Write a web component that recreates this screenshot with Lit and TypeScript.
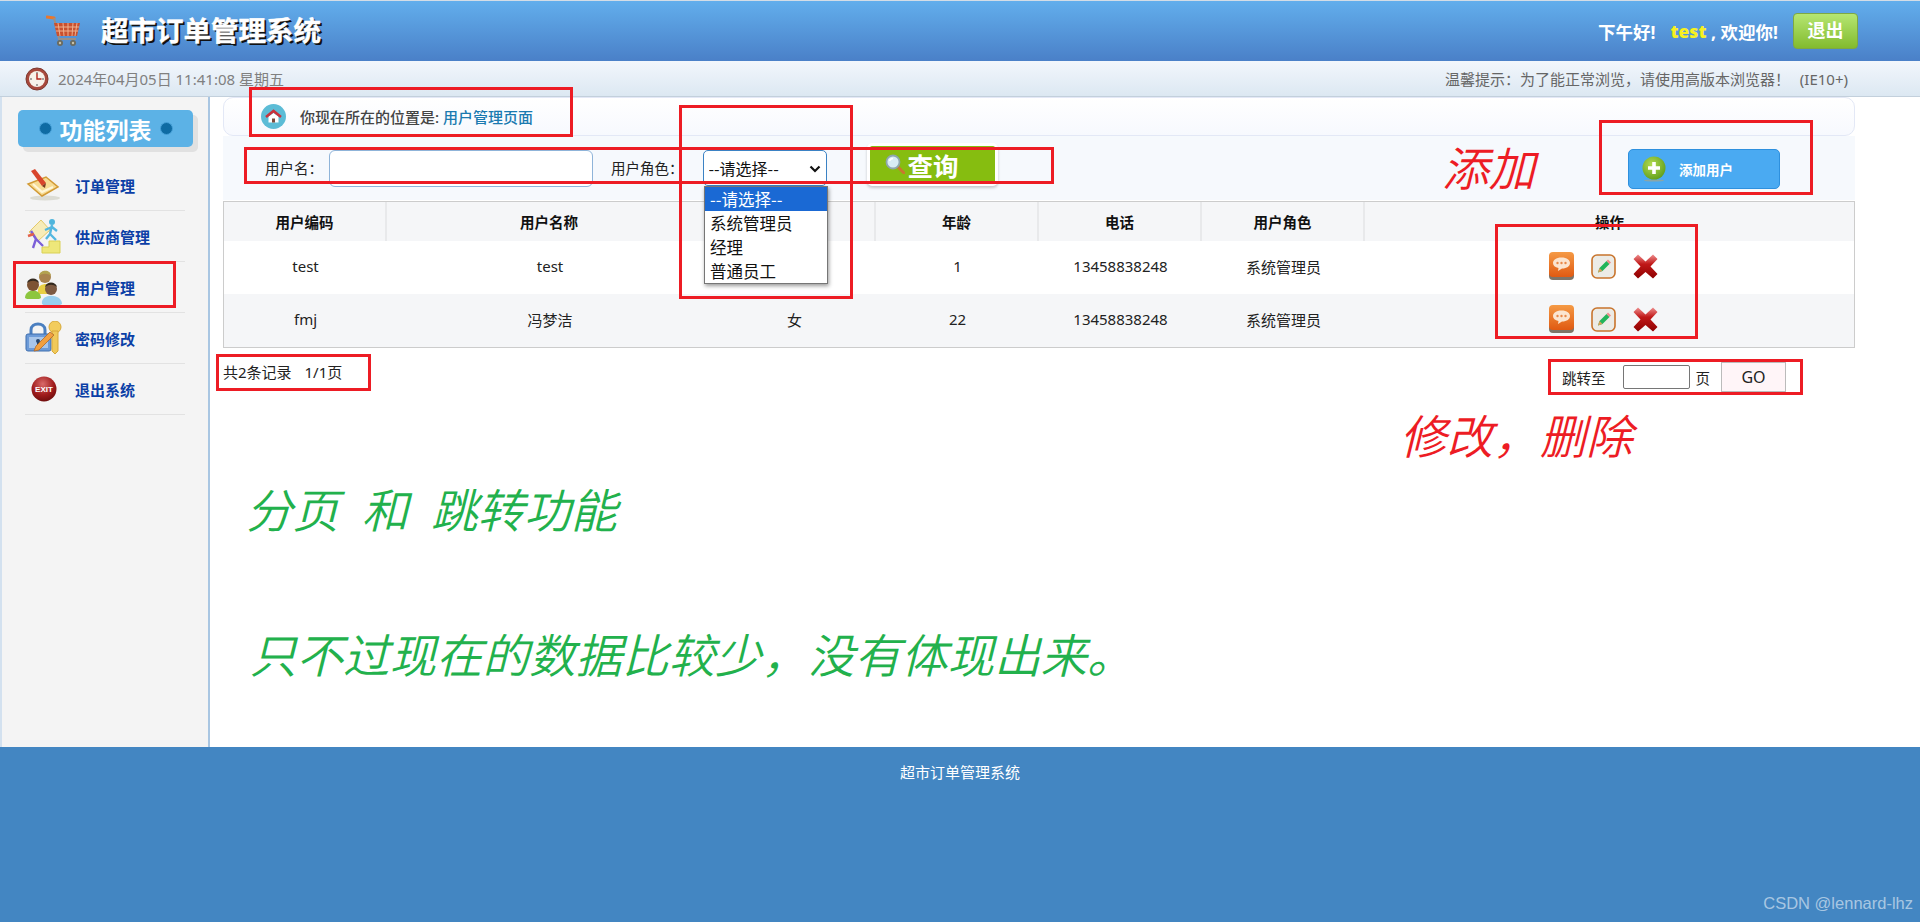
import { LitElement, html, css, svg } from 'lit';
import { customElement } from 'lit/decorators.js';
import { styleMap } from 'lit/directives/style-map.js';

const cartIcon = html`<svg width="35" height="32" viewBox="0 0 35 32">
  <path d="M1 2 L8 3" stroke="#e8772e" stroke-width="3" fill="none" stroke-linecap="round"/>
  <path d="M8 3 L13 24 L30 24" stroke="#9a8f88" stroke-width="2" fill="none"/>
  <path d="M8 8 H34 L31 21 H11 Z" fill="#c9502f"/>
  <path d="M12 8 L14 21 M17 8 L18 21 M22 8 L22 21 M27 8 L26 21 M31 8 L29 21 M9 12 H33 M10 16 H32" stroke="#eeb08e" stroke-width="1"/>
  <circle cx="14" cy="28" r="3" fill="#6b6b5f"/><circle cx="27" cy="28" r="3" fill="#6b6b5f"/>
  <circle cx="14" cy="28" r="1.2" fill="#c9c2a8"/><circle cx="27" cy="28" r="1.2" fill="#c9c2a8"/>
</svg>`;

const clockIcon = html`<svg width="24" height="24" viewBox="0 0 24 24">
  <circle cx="12" cy="12" r="11" fill="#a8483c" stroke="#7d3a30" stroke-width="1"/>
  <circle cx="12" cy="12" r="8" fill="#f7f2ea"/>
  <path d="M12 5 V7 M12 17 V19 M5 12 H7 M17 12 H19" stroke="#555" stroke-width="1"/>
  <path d="M12 6.5 V12 L16.5 12" stroke="#b3261e" stroke-width="1.4" fill="none"/>
</svg>`;

const homeIcon = html`<svg width="25" height="25" viewBox="0 0 25 25">
  <circle cx="12.5" cy="12.5" r="12.5" fill="#5cbcd6"/>
  <path d="M7.5 12.5 V18.5 H17.5 V12.5 L12.5 9 Z" fill="#fff"/>
  <path d="M11 14.5 H14 V18.5 H11 Z" fill="#7a4a3a"/>
  <path d="M5 13 L12.5 7 L20 13" stroke="#c8323c" stroke-width="2.6" fill="none"/>
</svg>`;

const orderIcon = html`<svg width="38" height="36" viewBox="0 0 38 36">
  <ellipse cx="20" cy="31" rx="15" ry="2.5" fill="#dcdcd4"/>
  <path d="M3 17 L17 29 L33 20 L21 10 Z" fill="#f7dc94" stroke="#d29a35" stroke-width="1.5"/>
  <path d="M8 17 L17 25 L28 20" stroke="#fff6d8" stroke-width="2" fill="none"/>
  <path d="M6 4 L10 2 L21 16 L17 19 Z" fill="#d8452c"/>
  <path d="M17 19 L21 16 L20 21 Z" fill="#7a3a20"/>
</svg>`;

const supplierIcon = html`<svg width="38" height="38" viewBox="0 0 38 38">
  <path d="M17 36 V30 H24 V24 H35 V36 Z" fill="#eee77a" stroke="#d9d055" stroke-width="1"/>
  <path d="M4 15 L16 3 L25 13 L13 24 Z" fill="#f7ecb8" stroke="#e3c96a" stroke-width="1"/>
  <circle cx="27" cy="5" r="3" fill="#4fb5dc"/>
  <path d="M27 8 L25 17 L21 22 M25 17 L31 23 M27 10 L32 14 M27 10 L20 13" stroke="#53b7e0" stroke-width="2.4" fill="none"/>
  <path d="M6 14 L11 22 L8 31 M11 22 L18 29" stroke="#7b5fd8" stroke-width="2.4" fill="none"/>
  <path d="M3 19 L9 17" stroke="#e2624a" stroke-width="2.4"/>
</svg>`;

const usersIcon = html`<svg width="38" height="38" viewBox="0 0 38 38">
  <path d="M13 22 C13 14 29 14 29 22 V26 H13 Z" fill="#e8cf45"/>
  <circle cx="20" cy="9" r="6" fill="#a9834e"/>
  <path d="M14 8 C15 1 26 1 26 8 C23 5 17 5 14 8 Z" fill="#b3a250"/>
  <path d="M0 30 C0 20 16 20 16 30 L14 31 H2 Z" fill="#8dc63f"/>
  <circle cx="8" cy="17" r="6" fill="#7d5334"/>
  <path d="M2 15 C3 9 13 9 14 15 C10 12 6 12 2 15 Z" fill="#33291f"/>
  <path d="M17 36 C15 25 37 25 37 36 L33 38 H20 Z" fill="#98cfee"/>
  <circle cx="26" cy="21" r="6" fill="#7d5a42"/>
  <path d="M20 19 C21 13 31 13 32 19 C28 16 24 16 20 19 Z" fill="#33291f"/>
</svg>`;

const lockIcon = html`<svg width="38" height="34" viewBox="0 0 38 34">
  <path d="M6 14 V9 C6 1 20 1 20 9 V14" stroke="#4a7fc0" stroke-width="3" fill="none"/>
  <rect x="1" y="13" width="25" height="17" rx="2" fill="#6d9bd8" stroke="#3f6fae"/>
  <rect x="4" y="16" width="19" height="11" fill="#a9c6ea"/>
  <circle cx="13" cy="20" r="2" fill="#26466f"/><rect x="12" y="20" width="2" height="5" fill="#26466f"/>
  <circle cx="30" cy="6" r="6" fill="#f2cc5e" stroke="#d7a93a"/>
  <path d="M27 10 H33 V30 L30 33 L27 30 Z" fill="#f0c95a" stroke="#d7a93a"/>
  <path d="M9 30 L11 25 L25 11 L29 14 L14 29 Z" fill="#f2a040" stroke="#b06a28" stroke-width=".8"/>
</svg>`;

const exitIcon = html`<svg width="26" height="26" viewBox="0 0 26 26">
  <defs><radialGradient id="exitBall" cx=".45" cy=".3" r=".8">
    <stop offset="0" stop-color="#d96a6a"/><stop offset=".55" stop-color="#a01c1c"/><stop offset="1" stop-color="#5e0808"/>
  </radialGradient></defs>
  <circle cx="13" cy="13" r="12.5" fill="url(#exitBall)"/>
  <text x="13" y="15.5" text-anchor="middle" font-family="Liberation Sans, sans-serif" font-size="8" font-weight="700" fill="#fff">EXIT</text>
</svg>`;

const plusIcon = html`<svg width="24" height="26" viewBox="0 0 24 26">
  <defs><radialGradient id="plusBall" cx=".4" cy=".35" r=".7">
    <stop offset="0" stop-color="#b4dc52"/><stop offset="1" stop-color="#5f9e1a"/>
  </radialGradient></defs>
  <ellipse cx="12" cy="24.5" rx="10" ry="1" fill="#8aa6a8"/>
  <circle cx="12" cy="12" r="11.5" fill="url(#plusBall)"/>
  <path d="M12 6 V18 M6 12 H18" stroke="#fff" stroke-width="3.6"/>
</svg>`;

const chatIcon = html`<svg width="25" height="28" viewBox="0 0 25 28">
  <defs><linearGradient id="chatBg" x1="0" y1="0" x2="0" y2="1">
    <stop offset="0" stop-color="#f59a45"/><stop offset="1" stop-color="#e05a12"/>
  </linearGradient></defs>
  <rect x="0" y="2" width="25" height="26" rx="4" fill="#7d7468"/>
  <rect x="0" y="0" width="25" height="25" rx="4" fill="url(#chatBg)"/>
  <path d="M12.5 5.5 C18 5.5 21 8 21 11 C21 14 18 16.5 13 16.5 L9 19 L9.5 16 C6 15.5 4 13.5 4 11 C4 8 7 5.5 12.5 5.5 Z" fill="#fbe5d0"/>
  <circle cx="8.5" cy="11" r="1.2" fill="#e8894a"/><circle cx="12.5" cy="11" r="1.2" fill="#e8894a"/><circle cx="16.5" cy="11" r="1.2" fill="#e8894a"/>
</svg>`;

const editIcon = html`<svg width="25" height="25" viewBox="0 0 25 25">
  <rect x="1" y="1" width="23" height="23" rx="5" fill="#ecebe6" stroke="#c8742c" stroke-width="1.6"/>
  <path d="M7 18.5 L8.5 14 L15.5 7 L18.5 10 L11.5 17 Z" fill="#22b45a"/>
  <path d="M15.5 7 L17 5.5 L20 8.5 L18.5 10 Z" fill="#ef8c8c"/>
  <path d="M7 18.5 L8.5 14 L11.5 17 Z" fill="#d9a05a"/>
</svg>`;

const delIcon = html`<svg width="25" height="25" viewBox="0 0 25 25">
  <defs><linearGradient id="delBg" x1="0" y1="0" x2="0" y2="1">
    <stop offset="0" stop-color="#ef8f8f"/><stop offset=".4" stop-color="#c01818"/><stop offset="1" stop-color="#8e0000"/>
  </linearGradient></defs>
  <path d="M0.5 5 L5 0.5 L12.5 7.5 L20 0.5 L24.5 5 L17.5 12.5 L24.5 20 L20 24.5 L12.5 18 L5 24.5 L0.5 20 L7.5 12.5 Z" fill="url(#delBg)"/>
</svg>`;

const searchIcon = svg`<path d="M12 12 L20 20" stroke="#c9772e" stroke-width="3"/>
  <circle cx="8" cy="8" r="6.5" fill="#d8ecf4" stroke="#8ea6ad" stroke-width="1.8"/>
  <path d="M4.5 7 C5 5.5 6.5 4.5 8 4.5" stroke="#fff" stroke-width="1.4" fill="none"/>`;

const chevron = html`<svg class="chev" width="12" height="8" viewBox="0 0 12 8">
  <path d="M1.5 1.5 L6 6 L10.5 1.5" stroke="#111" stroke-width="2.2" fill="none"/>
</svg>`;

const MENU = [
  { name: '订单管理', icon: orderIcon },
  { name: '供应商管理', icon: supplierIcon },
  { name: '用户管理', icon: usersIcon },
  { name: '密码修改', icon: lockIcon },
  { name: '退出系统', icon: exitIcon },
];

const COLUMNS = ['用户编码', '用户名称', '性别', '年龄', '电话', '用户角色', '操作'];

const ROWS = [
  ['test', 'test', '女', '1', '13458838248', '系统管理员'],
  ['fmj', '冯梦洁', '女', '22', '13458838248', '系统管理员'],
];

const ROLES = ['--请选择--', '系统管理员', '经理', '普通员工'];

// hand drawn review marks lying over the page: left, top, width, height
const MARKS = [
  [249, 87, 324, 50],
  [244, 147, 810, 37],
  [679, 105, 174, 194],
  [1599, 120, 214, 75],
  [13, 261, 163, 47],
  [1495, 224, 203, 115],
  [216, 354, 155, 37],
  [1548, 359, 255, 36],
];

const NOTES = [
  { text: '添加', x: 1442, y: 136, color: '#ed1c24' },
  { text: '修改，删除', x: 1400, y: 404, color: '#ed1c24' },
  { text: '分页  和  跳转功能', x: 246, y: 478, color: '#22b14c' },
  { text: '只不过现在的数据比较少，没有体现出来。', x: 250, y: 623, color: '#22b14c' },
];

@customElement('app-root')
export class AppRoot extends LitElement {
  static styles = css`
    :host {
      display: block;
      position: relative;
      width: 1920px;
      height: 922px;
      overflow: hidden;
      background: #fff;
      font-family: "Noto Sans", "Noto Sans CJK SC", sans-serif;
      font-size: 15px;
      color: #222;
    }
    .top {
      height: 61px;
      box-sizing: border-box;
      border-top: 1px solid #d4dde6;
      background: linear-gradient(#62aeec, #4a80c8);
      display: flex;
      align-items: center;
      padding: 0 62px 0 46px;
    }
    .brand {
      margin-left: 20px;
      font-size: 27.5px;
      font-weight: 700;
      line-height: 36px;
      color: #fff;
      -webkit-text-stroke: 0.4px #fff;
      text-shadow: 2px 2px 0 #111;
    }
    .hello {
      margin-left: auto;
      font-size: 17.5px;
      font-weight: 700;
      color: #fff;
      display: flex;
      align-items: center;
      white-space: pre;
    }
    .hello b { color: #f7f120; margin-left: 15px; }
    .logout {
      margin-left: 15px;
      width: 65px;
      height: 36px;
      box-sizing: border-box;
      border: 1px solid #7ea843;
      border-radius: 4px;
      background: linear-gradient(#b5e672, #82bb2e);
      font-size: 18px;
      line-height: 33px;
      text-align: center;
    }
    .sub {
      height: 36px;
      box-sizing: border-box;
      border-bottom: 1px solid #c3d0dc;
      background: linear-gradient(#f2f6fc, #dce8f2);
      display: flex;
      align-items: center;
      padding: 0 72px 0 25px;
      color: #808080;
    }
    .sub .date { margin-left: 9px; }
    .sub .tip { margin-left: auto; color: #666; word-spacing: 6px; }
    .main { display: flex; height: 650px; }
    .side {
      width: 210px;
      box-sizing: border-box;
      border-left: 2px solid #d3e1ef;
      border-right: 2px solid #a9c6e2;
      background: #f4f4f4;
      padding: 13px 0 0 16px;
    }
    .side-title {
      width: 175px;
      height: 37px;
      border-radius: 5px;
      background: #5cb2e6;
      box-shadow: 5px 5px 0 #e1e1e1;
      display: flex;
      align-items: center;
      justify-content: center;
      gap: 8px;
      color: #fff;
      font-size: 23px;
      font-weight: 700;
      margin-bottom: 13px;
    }
    .dot {
      width: 11px;
      height: 11px;
      border-radius: 50%;
      background: #0f6ba3;
      border: 1px solid #47a0d8;
    }
    .menu { width: 160px; margin-left: 7px; }
    .menu-item {
      height: 50px;
      border-bottom: 1px solid #e2e2e2;
      display: flex;
      align-items: center;
      position: relative;
      padding-left: 50px;
      color: #0b3fa6;
      font-weight: 700;
    }
    .menu-icon {
      position: absolute;
      left: 0;
      top: 0;
      width: 38px;
      height: 50px;
      display: flex;
      align-items: center;
      justify-content: center;
    }
    .content { flex: 1; padding: 0 65px 0 13px; min-width: 0; }
    .path {
      height: 39px;
      box-sizing: border-box;
      border: 1px solid #e3e8f6;
      border-radius: 10px;
      background: linear-gradient(#fff, #f7f9fe);
      display: flex;
      align-items: center;
      padding-left: 37px;
      font-weight: 500;
      color: #444;
    }
    .path svg { margin-right: 14px; }
    .path span { color: #1a7ab0; margin-left: 4px; }
    .search {
      height: 64px;
      box-sizing: border-box;
      margin-bottom: 1px;
      background: #f6f9fd;
      display: flex;
      align-items: flex-start;
      padding: 14px 75px 0 42px;
      position: relative;
      font-size: 14.5px;
    }
    .search label { line-height: 36px; color: #222; }
    .name-input {
      width: 264px;
      height: 37px;
      box-sizing: border-box;
      margin-left: 6px;
      border: 1px solid #8fb4d9;
      border-radius: 6px;
      background: #fff;
    }
    .role-label { margin-left: 18px; }
    .role-box { position: relative; width: 124px; height: 36px; margin-left: 19px; }
    .role {
      appearance: none;
      width: 124px;
      height: 36px;
      box-sizing: border-box;
      border: 1px solid #3b82c4;
      border-radius: 5px;
      background: #fff;
      font: 16px "Noto Sans CJK SC", sans-serif;
      color: #111;
      padding: 0 0 0 5px;
    }
    .chev { position: absolute; right: 6px; top: 15px; }
    .role-list {
      position: absolute;
      left: 481px;
      top: 50px;
      width: 124px;
      box-sizing: border-box;
      border: 1px solid #767676;
      background: #fff;
      box-shadow: 1px 2px 4px rgba(0, 0, 0, 0.4);
      font-family: "Noto Sans CJK SC", sans-serif;
      font-size: 16.5px;
      line-height: 24px;
      color: #111;
      z-index: 2;
    }
    .role-list div { padding-left: 5px; height: 24px; }
    .role-list .on { background: #1a69d4; color: #fff; }
    .find {
      margin: -7px 0 0 40px;
      width: 125px;
      height: 36px;
      box-sizing: content-box;
      border: solid #fff;
      border-width: 3px 3px 4px;
      border-radius: 5px;
      box-shadow: 0 2px 3px rgba(0, 0, 0, 0.2);
      background: #86bd10;
      display: flex;
      align-items: center;
      color: #fff;
      font-size: 25.5px;
      font-weight: 700;
    }
    .find svg { margin: 0 3px 0 15px; }
    .add {
      margin-left: auto;
      width: 152px;
      height: 40px;
      box-sizing: border-box;
      margin-top: -1px;
      border: 1px solid #2e90de;
      border-radius: 5px;
      background: #4aaaf2;
      display: flex;
      align-items: center;
      padding-left: 13px;
      color: #fff;
      font-size: 13.5px;
      font-weight: 700;
    }
    .add svg { margin-right: 13px; }
    table {
      width: 100%;
      table-layout: fixed;
      border-collapse: separate;
      border-spacing: 0;
      border: 1px solid #ccc;
      text-align: center;
    }
    th {
      height: 39px;
      padding: 0;
      background: #f5f6f8;
      border-right: 2px solid #e8e9eb;
      font-size: 14.5px;
      font-weight: 700;
      color: #111;
    }
    th:last-child { border-right: 0; }
    td { height: 53px; box-sizing: border-box; padding: 0 0 3px; color: #222; }
    tr:nth-child(even) td { background: #f5f6f8; }
    .ops { display: flex; justify-content: center; align-items: center; gap: 17px; margin-left: -13px; }
    .pager { display: flex; align-items: flex-start; padding-top: 14px; }
    .count { line-height: 20px; word-spacing: 9px; }
    .jump { margin: 0 69px 0 auto; display: flex; align-items: center; height: 30px; font-size: 14.5px; }
    .jump-input {
      width: 67px;
      height: 24px;
      box-sizing: border-box;
      margin: 0 6px 0 17px;
      border: 1px solid #767676;
      border-radius: 2px;
      background: #fff;
    }
    .go {
      width: 65px;
      height: 30px;
      box-sizing: border-box;
      margin-left: 11px;
      border: 1px solid #bbb;
      background: #fff5f8;
      font-size: 16px;
      line-height: 28px;
      text-align: center;
    }
    .foot {
      height: 175px;
      background: #4386c2;
      color: #fff;
      text-align: center;
      padding-top: 14px;
      box-sizing: border-box;
      line-height: 22px;
    }
    .mark {
      position: absolute;
      box-sizing: border-box;
      border: 3px solid #ed1c24;
      z-index: 3;
    }
    .note {
      position: absolute;
      font-family: "Noto Sans CJK SC", sans-serif;
      font-size: 46.5px;
      font-style: italic;
      font-weight: 350;
      line-height: 60px;
      white-space: pre;
      word-spacing: 1px;
      z-index: 3;
    }
    .mark-text {
      position: absolute;
      right: 7px;
      bottom: 9px;
      font-family: "Liberation Sans", sans-serif;
      font-size: 16.5px;
      color: rgba(255, 255, 255, 0.55);
    }
  `;

  renderOps() {
    return html`<div class="ops">${chatIcon}${editIcon}${delIcon}</div>`;
  }

  render() {
    return html`
      <div class="top">
        ${cartIcon}
        <div class="brand">超市订单管理系统</div>
        <div class="hello">下午好!<b>test</b> , 欢迎你!<div class="logout">退出</div></div>
      </div>
      <div class="sub">
        ${clockIcon}
        <span class="date">2024年04月05日 11:41:08 星期五</span>
        <span class="tip">温馨提示：为了能正常浏览，请使用高版本浏览器！ (IE10+)</span>
      </div>
      <div class="main">
        <aside class="side">
          <div class="side-title"><i class="dot"></i>功能列表<i class="dot"></i></div>
          <div class="menu">
            ${MENU.map(m => html`<div class="menu-item"><span class="menu-icon">${m.icon}</span>${m.name}</div>`)}
          </div>
        </aside>
        <section class="content">
          <div class="path">${homeIcon}你现在所在的位置是:<span>用户管理页面</span></div>
          <div class="search">
            <label>用户名：</label>
            <div class="name-input"></div>
            <label class="role-label">用户角色：</label>
            <div class="role-box">
              <select class="role"><option>--请选择--</option></select>
              ${chevron}
            </div>
            <div class="role-list">
              ${ROLES.map((r, i) => html`<div class=${i === 0 ? 'on' : ''}>${r}</div>`)}
            </div>
            <div class="find"><svg width="20" height="20" viewBox="0 0 20 20">${searchIcon}</svg>查询</div>
            <div class="add">${plusIcon}添加用户</div>
          </div>
          <table>
            <colgroup>
              <col style="width:10%"><col style="width:20%"><col style="width:10%"><col style="width:10%">
              <col style="width:10%"><col style="width:10%"><col style="width:30%">
            </colgroup>
            <thead><tr>${COLUMNS.map(c => html`<th>${c}</th>`)}</tr></thead>
            <tbody>
              ${ROWS.map(r => html`<tr>${r.map(v => html`<td>${v}</td>`)}<td>${this.renderOps()}</td></tr>`)}
            </tbody>
          </table>
          <div class="pager">
            <div class="count">共2条记录 1/1页</div>
            <div class="jump">跳转至<div class="jump-input"></div>页<div class="go">GO</div></div>
          </div>
        </section>
      </div>
      <div class="foot">超市订单管理系统</div>
      <div class="mark-text">CSDN @lennard-lhz</div>
      ${MARKS.map(([x, y, w, h]) => html`<div class="mark" style=${styleMap({ left: x + 'px', top: y + 'px', width: w + 'px', height: h + 'px' })}></div>`)}
      ${NOTES.map(n => html`<div class="note" style=${styleMap({ left: n.x + 'px', top: n.y + 'px', color: n.color })}>${n.text}</div>`)}
    `;
  }
}
